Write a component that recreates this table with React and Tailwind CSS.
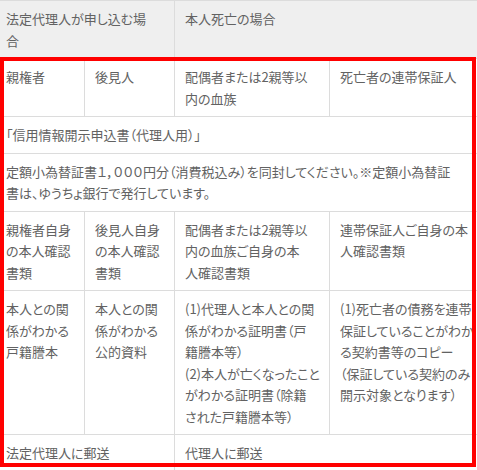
import React from "react";

const cell =
  "border border-[#dcdcdc] px-[10px] py-[7px] align-top text-left font-normal whitespace-nowrap overflow-hidden";

function Lines({ items }) {
  return items.map((t, i) => (
    <React.Fragment key={i}>
      {i > 0 && <br />}
      {t}
    </React.Fragment>
  ));
}

const rows = [
  [
    { lines: ["親権者"] },
    { lines: ["後見人"] },
    { lines: ["配偶者または2親等以", "内の血族"] },
    { lines: ["死亡者の連帯保証人"] },
  ],
  [{ span: 4, lines: ["「信用情報開示申込書（代理人用）」"] }],
  [
    {
      span: 4,
      lines: [
        "定額小為替証書１，０００円分（消費税込み）を同封してください。※定額小為替証",
        "書は、ゆうちょ銀行で発行しています。",
      ],
    },
  ],
  [
    { lines: ["親権者自身", "の本人確認", "書類"] },
    { lines: ["後見人自身", "の本人確認", "書類"] },
    { lines: ["配偶者または2親等以", "内の血族ご自身の本", "人確認書類"] },
    { lines: ["連帯保証人ご自身の本", "人確認書類"] },
  ],
  [
    { lines: ["本人との関", "係がわかる", "戸籍謄本"] },
    { lines: ["本人との関", "係がわかる", "公的資料"] },
    {
      lines: [
        "(1)代理人と本人との関",
        "係がわかる証明書（戸",
        "籍謄本等）",
        "(2)本人が亡くなったこと",
        "がわかる証明書（除籍",
        "された戸籍謄本等）",
      ],
    },
    {
      lines: [
        "(1)死亡者の債務を連帯",
        "保証していることがわか",
        "る契約書等のコピー",
        "（保証している契約のみ",
        "開示対象となります）",
      ],
    },
  ],
  [
    { span: 2, lines: ["法定代理人に郵送"] },
    { span: 2, lines: ["代理人に郵送"] },
  ],
];

export default function App() {
  return (
    <div
      className="relative w-[477px] h-[470px] overflow-hidden bg-white text-[#626262] text-[13px] leading-[21.5px] [font-feature-settings:'palt']"
      style={{ fontFamily: '"Noto Sans CJK JP", "Noto Sans", sans-serif' }}
    >
      <table className="table-fixed border-collapse w-[489px] ml-[-5px]">
        <colgroup>
          <col className="w-[89px]" />
          <col className="w-[90px]" />
          <col className="w-[155px]" />
          <col className="w-[155px]" />
        </colgroup>
        <thead>
          <tr className="bg-[#efefef]">
            <th colSpan={2} className={cell}>
              <Lines items={["法定代理人が申し込む場", "合"]} />
            </th>
            <th colSpan={2} className={cell}>
              本人死亡の場合
            </th>
          </tr>
        </thead>
        <tbody>
          {rows.map((row, r) => (
            <tr key={r}>
              {row.map((c, i) => (
                <td key={i} colSpan={c.span || 1} className={cell}>
                  <Lines items={c.lines} />
                </td>
              ))}
            </tr>
          ))}
        </tbody>
      </table>

      {/* red highlight frame drawn over the body rows */}
      <div className="pointer-events-none absolute left-0 top-[57px] w-[476px] h-[410px] border-4 border-[#ff0000]" />
    </div>
  );
}
